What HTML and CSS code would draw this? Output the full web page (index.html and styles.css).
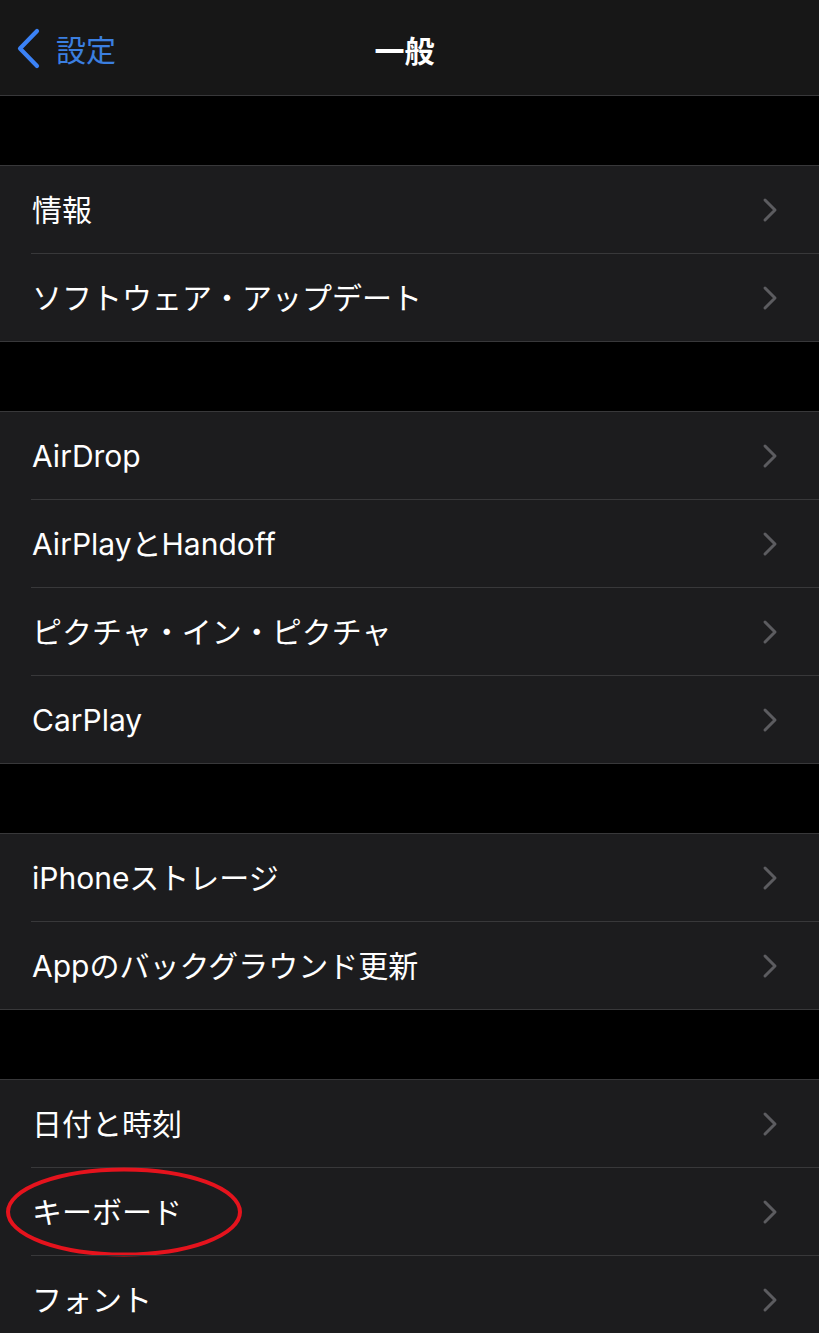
FILE: index.html
```html
<!DOCTYPE html>
<html lang="ja">
<head>
<meta charset="utf-8">
<title>一般</title>
<link rel="stylesheet" href="styles.css">
</head>
<body>
<header class="nav">
  <div class="back">
    <svg class="back-icon" width="30" height="44" viewBox="0 0 30 44"><polyline points="21,3 4,20.5 21,38" fill="none" stroke="#3b82f6" stroke-width="4.2" stroke-linecap="round" stroke-linejoin="round"/></svg>
    <span class="back-label">設定</span>
  </div>
  <h1 class="title">一般</h1>
</header>

<div class="gap"></div>
<section class="group">
  <div class="row"><span class="label">情報</span><svg class="chev" width="16" height="26" viewBox="0 0 16 26"><polyline points="3,3 13,13 3,23" fill="none" stroke="#5c5c60" stroke-width="3" stroke-linecap="round" stroke-linejoin="round"/></svg></div>
  <div class="row"><span class="label">ソフトウェア・アップデート</span><svg class="chev" width="16" height="26" viewBox="0 0 16 26"><polyline points="3,3 13,13 3,23" fill="none" stroke="#5c5c60" stroke-width="3" stroke-linecap="round" stroke-linejoin="round"/></svg></div>
</section>

<div class="gap"></div>
<section class="group">
  <div class="row"><span class="label">AirDrop</span><svg class="chev" width="16" height="26" viewBox="0 0 16 26"><polyline points="3,3 13,13 3,23" fill="none" stroke="#5c5c60" stroke-width="3" stroke-linecap="round" stroke-linejoin="round"/></svg></div>
  <div class="row"><span class="label">AirPlayとHandoff</span><svg class="chev" width="16" height="26" viewBox="0 0 16 26"><polyline points="3,3 13,13 3,23" fill="none" stroke="#5c5c60" stroke-width="3" stroke-linecap="round" stroke-linejoin="round"/></svg></div>
  <div class="row"><span class="label">ピクチャ・イン・ピクチャ</span><svg class="chev" width="16" height="26" viewBox="0 0 16 26"><polyline points="3,3 13,13 3,23" fill="none" stroke="#5c5c60" stroke-width="3" stroke-linecap="round" stroke-linejoin="round"/></svg></div>
  <div class="row"><span class="label">CarPlay</span><svg class="chev" width="16" height="26" viewBox="0 0 16 26"><polyline points="3,3 13,13 3,23" fill="none" stroke="#5c5c60" stroke-width="3" stroke-linecap="round" stroke-linejoin="round"/></svg></div>
</section>

<div class="gap"></div>
<section class="group">
  <div class="row"><span class="label">iPhoneストレージ</span><svg class="chev" width="16" height="26" viewBox="0 0 16 26"><polyline points="3,3 13,13 3,23" fill="none" stroke="#5c5c60" stroke-width="3" stroke-linecap="round" stroke-linejoin="round"/></svg></div>
  <div class="row"><span class="label">Appのバックグラウンド更新</span><svg class="chev" width="16" height="26" viewBox="0 0 16 26"><polyline points="3,3 13,13 3,23" fill="none" stroke="#5c5c60" stroke-width="3" stroke-linecap="round" stroke-linejoin="round"/></svg></div>
</section>

<div class="gap"></div>
<section class="group">
  <div class="row"><span class="label">日付と時刻</span><svg class="chev" width="16" height="26" viewBox="0 0 16 26"><polyline points="3,3 13,13 3,23" fill="none" stroke="#5c5c60" stroke-width="3" stroke-linecap="round" stroke-linejoin="round"/></svg></div>
  <div class="row"><span class="label">キーボード</span><svg class="chev" width="16" height="26" viewBox="0 0 16 26"><polyline points="3,3 13,13 3,23" fill="none" stroke="#5c5c60" stroke-width="3" stroke-linecap="round" stroke-linejoin="round"/></svg>
    <svg class="mark" width="240" height="92" viewBox="0 0 240 92"><ellipse cx="119" cy="46" rx="116" ry="42.5" fill="none" stroke="#e5131d" stroke-width="4"/></svg>
  </div>
  <div class="row"><span class="label">フォント</span><svg class="chev" width="16" height="26" viewBox="0 0 16 26"><polyline points="3,3 13,13 3,23" fill="none" stroke="#5c5c60" stroke-width="3" stroke-linecap="round" stroke-linejoin="round"/></svg></div>
</section>
</body>
</html>
```

FILE: styles.css
```css
* { box-sizing: border-box; }
html, body {
  margin: 0;
  padding: 0;
  background: #000;
}
body {
  width: 819px;
  height: 1333px;
  overflow: hidden;
  font-family: Inter, "Noto Sans CJK JP", sans-serif;
  color: #fff;
}
.nav {
  position: relative;
  height: 96px;
  background: #171717;
  border-bottom: 1px solid #38383a;
  display: flex;
  align-items: center;
  justify-content: center;
  padding-top: 6px;
}
.back {
  position: absolute;
  left: 16px;
  top: 28px;
  display: flex;
  align-items: center;
  gap: 10px;
}
.back-icon { display: block; }
.back-label {
  font-size: 30px;
  color: #3b7fe0;
  line-height: 44px;
}
.title {
  margin: 0;
  font-size: 30px;
  font-weight: 700;
  line-height: 44px;
  margin-right: 10px;
}
.gap { height: 69px; }
.group {
  background: #1c1c1e;
  border-top: 1px solid #38383a;
  border-bottom: 1px solid #38383a;
}
.row {
  position: relative;
  height: 87px;
  display: flex;
  align-items: center;
  justify-content: space-between;
  padding-left: 32px;
  padding-right: 41px;
}
.row + .row {
  height: 88px;
  padding-top: 1px;
  background-image: linear-gradient(#38383a, #38383a);
  background-size: calc(100% - 31px) 1px;
  background-position: 31px 0;
  background-repeat: no-repeat;
}
.label {
  font-size: 30px;
  line-height: 40px;
  white-space: nowrap;
}
.chev { display: block; flex: none; }
.mark {
  position: absolute;
  left: 5px;
  top: -1px;
}
```
